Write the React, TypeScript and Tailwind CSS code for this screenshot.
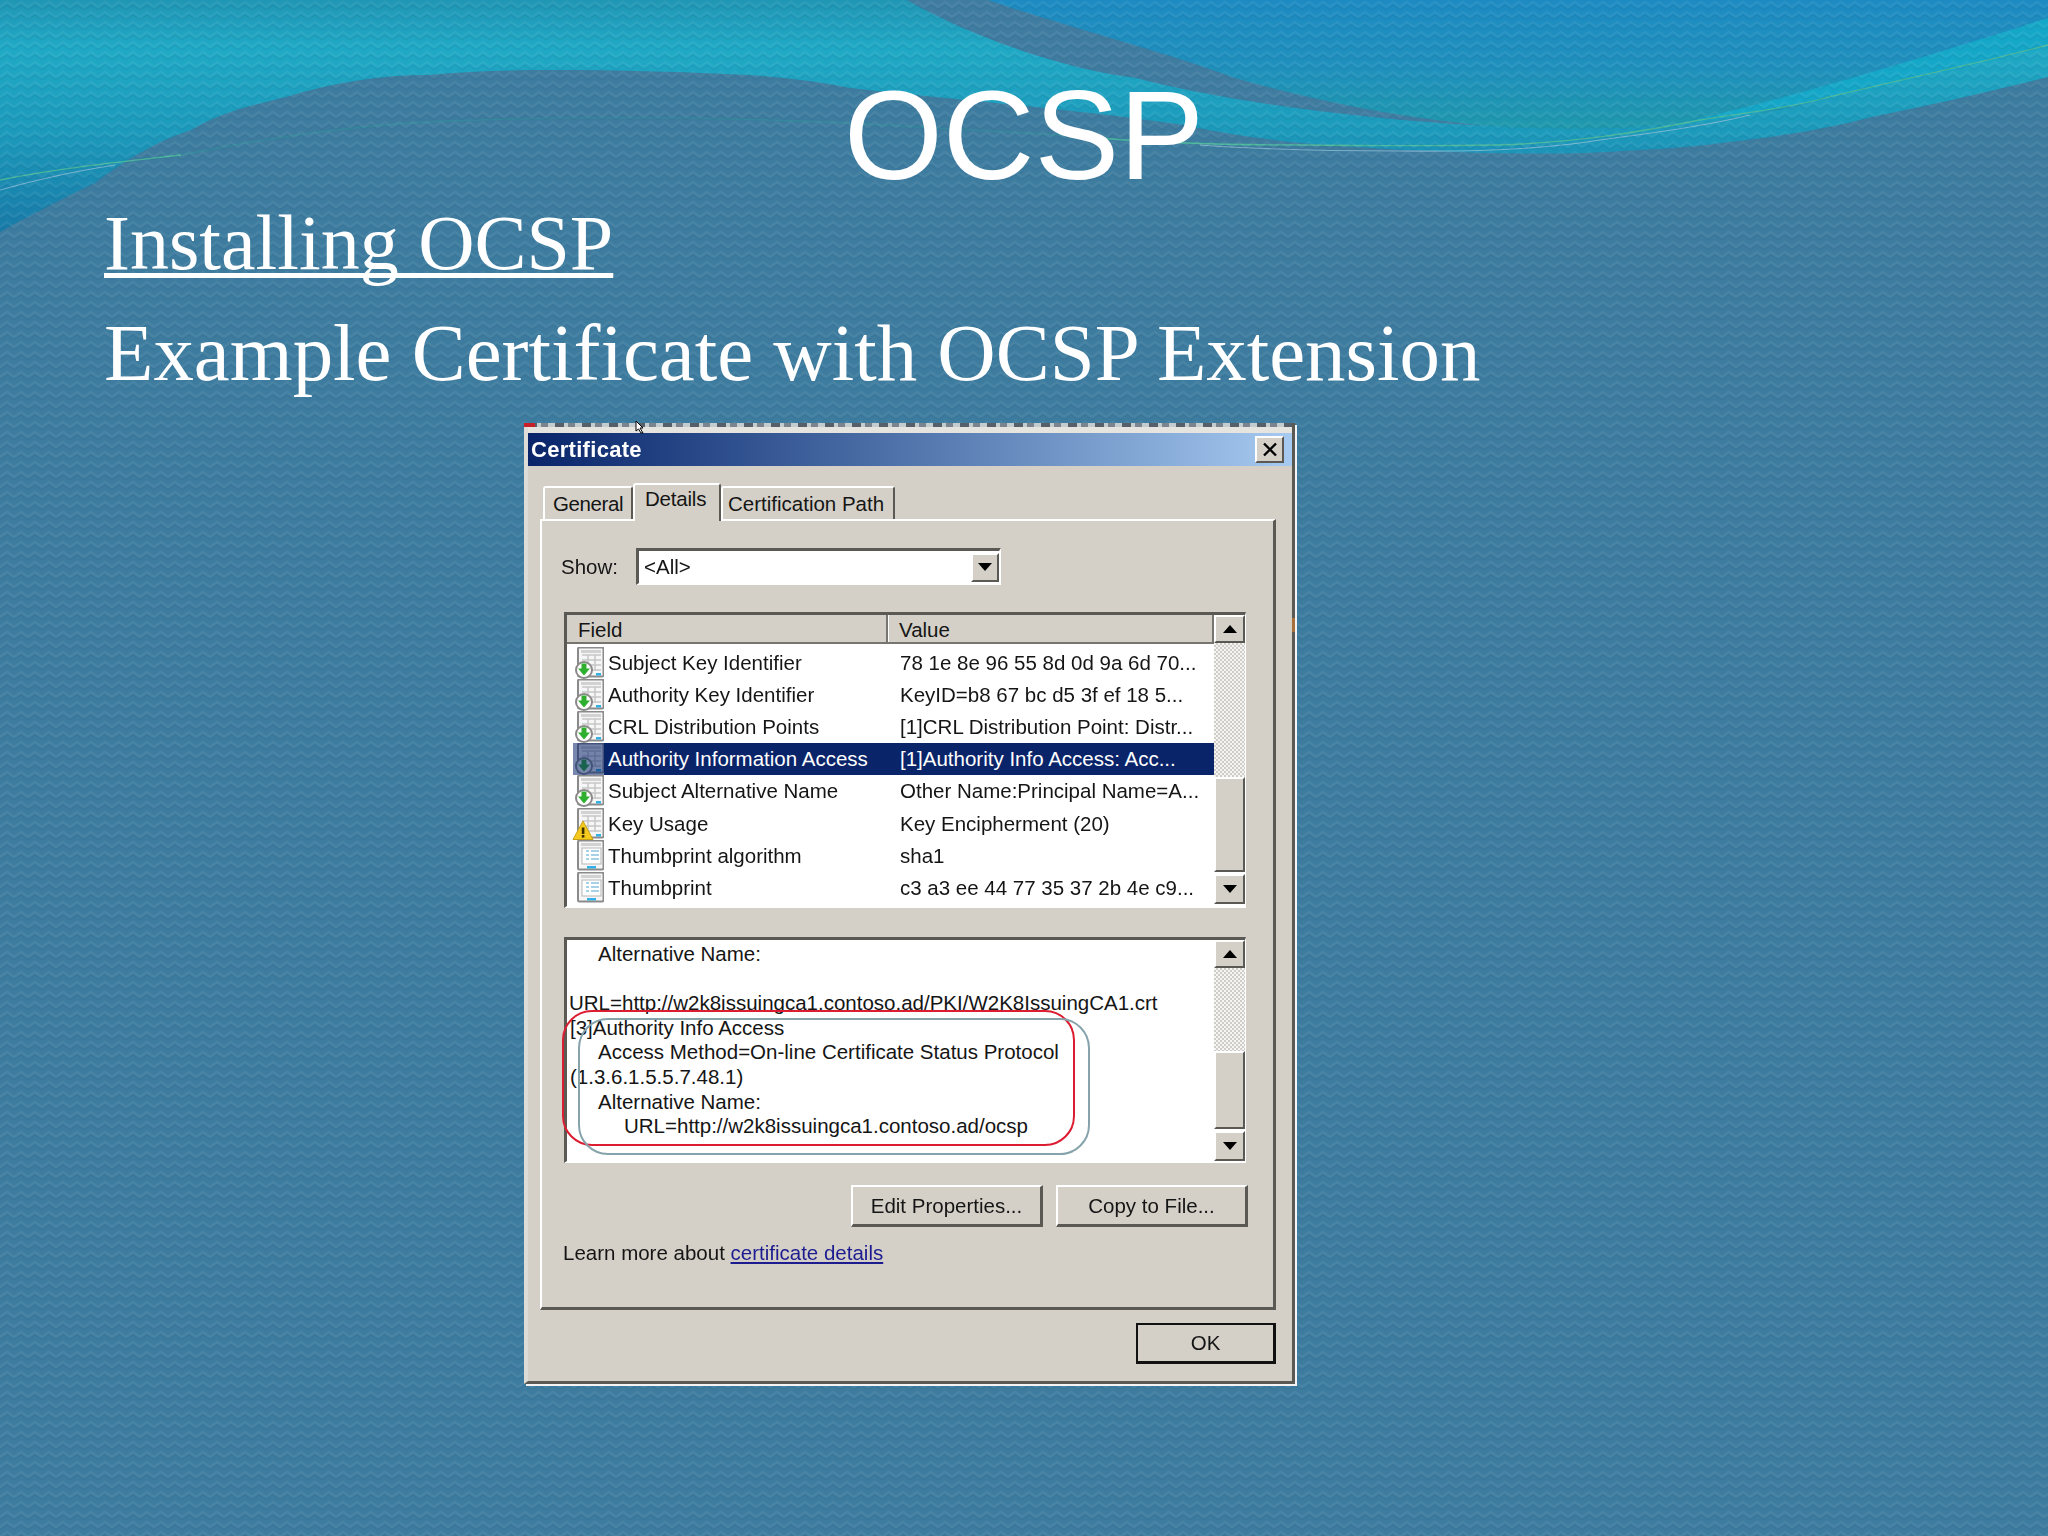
const rows = [
  { field: "Subject Key Identifier", value: "78 1e 8e 96 55 8d 0d 9a 6d 70...", icon: "ext" },
  { field: "Authority Key Identifier", value: "KeyID=b8 67 bc d5 3f ef 18 5...", icon: "ext" },
  { field: "CRL Distribution Points", value: "[1]CRL Distribution Point: Distr...", icon: "ext" },
  { field: "Authority Information Access", value: "[1]Authority Info Access: Acc...", icon: "ext", selected: true },
  { field: "Subject Alternative Name", value: "Other Name:Principal Name=A...", icon: "ext" },
  { field: "Key Usage", value: "Key Encipherment (20)", icon: "warn" },
  { field: "Thumbprint algorithm", value: "sha1", icon: "plain" },
  { field: "Thumbprint", value: "c3 a3 ee 44 77 35 37 2b 4e c9...", icon: "plain" },
];

const detailLines = [
  { text: "Alternative Name:", indent: "pl-[31px]" },
  { text: "\u00a0", indent: "pl-[2px]" },
  { text: "URL=http://w2k8issuingca1.contoso.ad/PKI/W2K8IssuingCA1.crt", indent: "pl-[2px]" },
  { text: "[3]Authority Info Access", indent: "pl-[3px]" },
  { text: "Access Method=On-line Certificate Status Protocol", indent: "pl-[31px]" },
  { text: "(1.3.6.1.5.5.7.48.1)", indent: "pl-[3px]" },
  { text: "Alternative Name:", indent: "pl-[31px]" },
  { text: "URL=http://w2k8issuingca1.contoso.ad/ocsp", indent: "pl-[57px]" },
];

const raised =
  "bg-[#d4d0c8] border-2 border-t-white border-l-white border-r-[#5a5954] border-b-[#5a5954]";

function Background() {
  return (
    <svg className="absolute inset-0" width="2048" height="1536" viewBox="0 0 2048 1536">
      <defs>
        <linearGradient id="teal" x1="0" y1="0" x2="0" y2="1">
          <stop offset="0" stopColor="#2096b4" />
          <stop offset="0.2" stopColor="#1fa9c5" />
          <stop offset="0.55" stopColor="#1c9abb" />
          <stop offset="1" stopColor="#1878a6" />
        </linearGradient>
        <linearGradient id="blue" x1="0" y1="0" x2="0" y2="1">
          <stop offset="0" stopColor="#1d8bc2" />
          <stop offset="0.5" stopColor="#1f90bd" />
          <stop offset="1" stopColor="#1f99ad" />
        </linearGradient>
        <pattern id="zig" width="14" height="10" patternUnits="userSpaceOnUse">
          <path d="M0 7 L7 2 L14 7" fill="none" stroke="#ffffff" strokeOpacity="0.055" strokeWidth="2.4" />
          <path d="M0 10 L7 5 L14 10" fill="none" stroke="#0a3c60" strokeOpacity="0.07" strokeWidth="2" />
        </pattern>
      </defs>
      <rect width="2048" height="240" fill="url(#teal)" />
      <path
        d="M988 0 C1050 30 1130 65 1232 77 C1310 100 1400 118 1489 126 C1560 130 1630 130 1682 123 C1740 115 1780 115 1825 97 C1900 68 1980 40 2048 18 L2048 0 Z"
        fill="url(#blue)"
      />
      <path d="M1682 123 C1780 100 1900 65 2048 18 L2048 47 C1950 70 1830 100 1729 118 Z" fill="#15a7c8" />
      <path
        d="M907 0 C950 25 1040 65 1136 78 C1200 95 1330 118 1489 126 C1400 118 1310 100 1232 77 C1160 50 1060 25 988 0 Z"
        fill="#3f7ca0"
      />
      <path
        d="M0 232 C40 210 70 195 95 183 C125 160 155 142 191 130 C225 110 255 105 286 97 C335 82 380 75 429 75 C470 71 510 70 549 70 C620 70 690 72 748 75 C790 78 820 82 850 88 C960 100 1080 110 1184 125 C1230 135 1280 142 1327 145 C1420 152 1510 155 1586 153 C1640 150 1690 148 1729 142 C1790 135 1830 128 1872 117 C1930 105 1990 92 2048 77 L2048 1536 L0 1536 Z"
        fill="#3d7c9f"
      />
      <path d="M0 180 C60 168 120 162 181 155" fill="none" stroke="#49b79a" strokeWidth="1.3" />
      <path
        d="M181 155 C280 135 380 122 477 120 C600 116 740 118 850 123 C930 128 1020 132 1100 138"
        fill="none"
        stroke="#2f9a9a"
        strokeOpacity="0.45"
        strokeWidth="1.3"
      />
      <path
        d="M1100 138 C1170 144 1240 145 1300 145 C1380 146 1440 146 1500 145 C1580 142 1640 132 1700 120 C1750 112 1790 108 1825 98 C1900 80 1970 65 2048 45"
        fill="none"
        stroke="#49b79a"
        strokeWidth="1.3"
      />
      <path
        d="M0 190 C35 180 70 172 115 165 M1200 145 C1270 150 1340 151 1400 151 C1470 152 1540 150 1600 140 C1660 132 1710 125 1750 115"
        fill="none"
        stroke="#8fbdd6"
        strokeOpacity="0.8"
        strokeWidth="1.2"
      />
      <rect width="2048" height="1536" fill="url(#zig)" />
    </svg>
  );
}

function CertIcon({ type, selected }: { type: string; selected?: boolean }) {
  return (
    <svg width="32" height="32" viewBox="0 0 32 32" className="shrink-0">
      <rect x="6" y="0.5" width="25.5" height="29" rx="1.5" fill="#f6f6f6" stroke="#8b8b8b" strokeWidth="2" />
      <rect x="9" y="3" width="20" height="3" fill="#d2d2d2" />
      {type === "plain" ? (
        <>
          <rect x="10" y="8" width="19" height="16" fill="#fff" stroke="#b5b5b5" />
          <path d="M14 11 H17 M19 11 H27 M14 15 H17 M19 15 H27 M14 19 H17 M19 19 H27" stroke="#8ac2e0" strokeWidth="1.5" />
          <rect x="15" y="26" width="9" height="2.5" fill="#35b0e6" />
        </>
      ) : (
        <>
          <path d="M10 8 H29 M10 13 H29 M10 18 H29 M10 23 H29 M16 8 V24 M23 8 V24" stroke="#c6c6c6" strokeWidth="1.5" />
          <rect x="24" y="26" width="5" height="2.5" fill="#35b0e6" />
        </>
      )}
      {type === "ext" && (
        <>
          <circle cx="12" cy="23" r="8" fill="#fff" stroke="#8a8a8a" strokeWidth="2" />
          <path d="M9.5 16.5 H14.5 V21.5 H18 L12 28.5 L6 21.5 H9.5 Z" fill="#2eb02e" />
        </>
      )}
      {type === "warn" && (
        <>
          <path d="M11 13 L21 31.5 H1 Z" fill="#f5c91e" stroke="#c9a214" />
          <rect x="9.8" y="19.5" width="2.6" height="6.5" fill="#3a3000" />
          <rect x="9.8" y="27" width="2.6" height="2.6" fill="#3a3000" />
        </>
      )}
      {selected && <rect x="1" y="0" width="31" height="32" fill="#0a246a" fillOpacity="0.55" />}
    </svg>
  );
}

function Arrow({ up }: { up?: boolean }) {
  return (
    <svg width="14" height="8" viewBox="0 0 14 8">
      <path d={up ? "M7 0 L14 8 H0 Z" : "M0 0 H14 L7 8 Z"} fill="#000" />
    </svg>
  );
}

function ScrollBar({ trackClass, thumbClass }: { trackClass: string; thumbClass: string }) {
  return (
    <div className="flex w-[31px] shrink-0 flex-col">
      <div className={`${raised} flex h-[28px] items-center justify-center`}>
        <Arrow up />
      </div>
      <div className={`${trackClass} bg-[repeating-conic-gradient(#cfcdc8_0_25%,#f6f5f3_0_50%)] bg-[length:4px_4px]`} />
      <div className={`${raised} ${thumbClass}`} />
      <div className={`${raised} mt-[2px] flex h-[30px] items-center justify-center`}>
        <Arrow />
      </div>
    </div>
  );
}

function Tab({ label, className }: { label: string; className: string }) {
  return (
    <div className={`rounded-t-[3px] border-t-2 border-l-2 border-r-2 border-t-white border-l-white border-r-[#5a5954] bg-[#d4d0c8] ${className}`}>
      {label}
    </div>
  );
}

function PushButton({ label, className }: { label: string; className: string }) {
  return <div className={`${raised} flex items-center justify-center border-r-[3px] border-b-[3px] ${className}`}>{label}</div>;
}

function Dialog() {
  return (
    <div className="relative ml-[524px] mt-[15px] h-[961px] w-[771px] border-l-[4px] border-r-[3px] border-b-[3px] border-l-[#dedcd6] border-r-[#5a5954] border-b-[#5a5954] bg-[#d4d0c8] text-[20.5px] leading-[26px] text-[#151515] shadow-[2px_2px_0_#f4f4f4] blur-[0.4px] font-['Liberation_Sans',sans-serif]">
      <div className="relative h-[10px] bg-[#e6e4df]">
        <div className="h-[4px] w-full bg-[repeating-linear-gradient(90deg,#55606b_0_9px,#c4ccd0_9px_13px,#7b8590_13px_20px,#c4ccd0_20px_27px)]" />
        <div className="absolute left-[-4px] top-0 h-[4px] w-[11px] bg-[#c8202a]" />
        <svg className="absolute left-[107px] top-[-3px]" width="10" height="14" viewBox="0 0 10 14">
          <path d="M1 1 L8 8 L5 8 L8 13 L6 13 L3.5 9 L1 11 Z" fill="#fff" stroke="#000" strokeWidth="1" />
        </svg>
      </div>
      <div className="absolute left-full top-[112px] h-[28px] w-[3px] bg-[#5a5954]" />
      <div className="absolute left-full top-[195px] h-[14px] w-[3px] bg-[#a5703a]" />
      <div className="flex h-[33px] items-center justify-between bg-gradient-to-r from-[#0a246a] to-[#a6caf0] pl-[3px] pr-[8px]">
        <span className="text-[22px] font-bold tracking-[0.3px] text-white">Certificate</span>
        <div className={`${raised} flex h-[27px] w-[29px] items-center justify-center`}>
          <svg width="16" height="15" viewBox="0 0 16 15">
            <path d="M2 1.5 L14 13.5 M14 1.5 L2 13.5" stroke="#000" strokeWidth="2.4" />
          </svg>
        </div>
      </div>

      <div className="ml-[12px] mr-[16px] mt-[15px]">
        <div className="relative z-10 flex h-[38px] items-end pl-[3px]">
          <Tab label="General" className="h-[33px] w-[90px] pl-[8px] pt-[3px] tracking-[-0.4px]" />
          <Tab label="Details" className="mb-[-2px] h-[38px] w-[88px] pl-[10px] pt-[1px] tracking-[-0.2px]" />
          <Tab label="Certification Path" className="h-[33px] w-[174px] pl-[5px] pt-[3px]" />
        </div>
        <div className="h-[791px] border-t-2 border-l-2 border-r-[3px] border-b-[3px] border-t-white border-l-white border-r-[#5a5954] border-b-[#5a5954] pl-[22px] pr-[26px]">
          <div className="mt-[27px] flex h-[37px] items-center">
            <span className="ml-[-3px] w-[72px]">Show:</span>
            <div className="ml-[3px] flex h-[37px] w-[365px] items-center justify-between border-t-[3px] border-l-[3px] border-r-2 border-b-2 border-t-[#5a5954] border-l-[#5a5954] border-r-white border-b-white bg-white pl-[5px] pr-0">
              <span>&lt;All&gt;</span>
              <div className={`${raised} flex h-[29px] w-[28px] items-center justify-center`}>
                <Arrow />
              </div>
            </div>
          </div>

          <div className="mt-[27px] flex h-[296px] w-[682px] border-t-[3px] border-l-[3px] border-r border-b-2 border-t-[#5a5954] border-l-[#5a5954] border-r-white border-b-white bg-white">
            <div className="min-w-0 flex-1">
              <div className="flex h-[29px] border-b-2 border-b-[#77756f] bg-[#d4d0c8]">
                <div className="w-[321px] border-r-2 border-r-[#77756f] pl-[11px] pt-[2px]">Field</div>
                <div className="flex-1 border-l border-r-2 border-l-white border-r-[#77756f] pl-[10px] pt-[2px]">Value</div>
              </div>
              <div className="pt-[3px]">
                {rows.map((row) => (
                  <div key={row.field} className="flex h-[32.1px] items-center pl-[5px]">
                    <CertIcon type={row.icon} selected={row.selected} />
                    <div className={`flex h-full flex-1 items-center whitespace-nowrap ${row.selected ? "bg-[#0a246a] text-white" : ""}`}>
                      <span className="w-[296px] pl-[4px]">{row.field}</span>
                      <span>{row.value}</span>
                    </div>
                  </div>
                ))}
              </div>
            </div>
            <ScrollBar trackClass="h-[134px]" thumbClass="h-[95px]" />
          </div>

          <div className="relative mt-[29px] flex h-[226px] w-[682px] border-t-[3px] border-l-[3px] border-r border-b-2 border-t-[#5a5954] border-l-[#5a5954] border-r-white border-b-white bg-white">
            <div className="min-w-0 flex-1 whitespace-nowrap pt-[2px] leading-[24.6px]">
              {detailLines.map((line, i) => (
                <div key={i} className={line.indent}>
                  {line.text}
                </div>
              ))}
            </div>
            <ScrollBar trackClass="h-[84px]" thumbClass="h-[78px]" />
            <div className="absolute left-[-5px] top-[70px] h-[136px] w-[513px] rounded-[30px] border-2 border-[#dc1c30]" />
            <div className="absolute left-[11px] top-[78px] h-[137px] w-[512px] rounded-[30px] border-2 border-[#86a3ac]" />
          </div>

          <div className="mt-[22px] flex w-[684px] justify-end gap-[13px]">
            <PushButton label="Edit Properties..." className="h-[42px] w-[192px]" />
            <PushButton label="Copy to File..." className="h-[42px] w-[192px]" />
          </div>
          <div className="ml-[-1px] mt-[13px] h-[26px]">
            Learn more about <span className="text-[#1c1c90] underline">certificate details</span>
          </div>
        </div>
        <div className="mt-[13px] flex justify-end">
          <div className="flex h-[41px] w-[140px] items-center justify-center border-2 border-b-[3px] border-r-[3px] border-[#111] bg-[#d4d0c8]">OK</div>
        </div>
      </div>
    </div>
  );
}

export default function App() {
  return (
    <div className="relative h-[1536px] w-[2048px] overflow-hidden bg-[#3d7c9f]">
      <Background />
      <div className="relative">
        <h1 className="pt-[63px] text-center text-[127px] leading-[144px] text-white font-['Liberation_Sans',sans-serif]">OCSP</h1>
        <div className="pl-[104px] text-white font-['Liberation_Serif',serif]">
          <p className="mt-[-19px] text-[78px] leading-[110px] underline decoration-[5px] underline-offset-[4px] [text-decoration-skip-ink:none]">
            Installing OCSP
          </p>
          <p className="text-[80.9px] leading-[110px]">Example Certificate with OCSP Extension</p>
        </div>
        <Dialog />
      </div>
    </div>
  );
}
